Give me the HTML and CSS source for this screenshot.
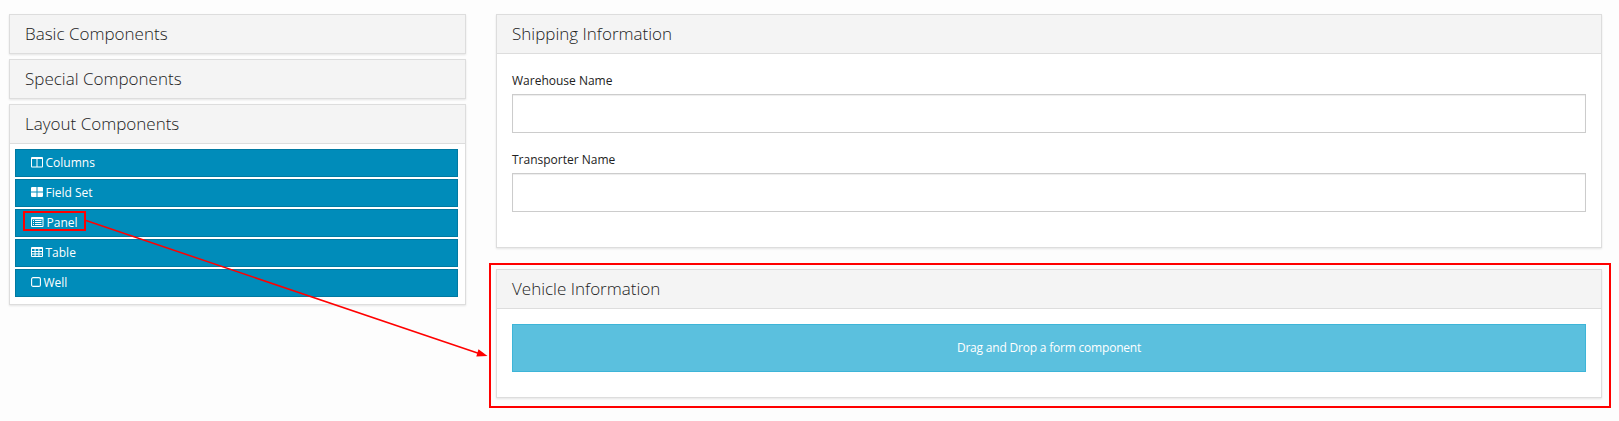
FILE: index.html
```
<!DOCTYPE html>
<html lang="en">
<head>
<meta charset="utf-8">
<title>Form Builder</title>
<link rel="stylesheet" href="styles.css">
</head>
<body>
<div class="builder">
  <aside class="sidebar">
    <section class="panel"><h4 class="heading">Basic Components</h4></section>
    <section class="panel"><h4 class="heading">Special Components</h4></section>
    <section class="panel">
      <h4 class="heading open">Layout Components</h4>
      <div class="components">
        <div class="component"><svg class="icon" width="12" height="11" viewBox="0 0 12 11"><path fill="#fff" fill-rule="evenodd" d="M1 0h10a1 1 0 0 1 1 1v8.500a1 1 0 0 1-1 1H1a1 1 0 0 1-1-1V1a1 1 0 0 1 1-1zM1 2v7.500h4.500V2zM6.500 2v7.500H11V2z"/></svg><span>Columns</span></div>
        <div class="component"><svg class="icon" width="12" height="11" viewBox="0 0 12 11"><path fill="#fff" d="M.8 0h4.700v4.500H0V.8zM6.500 0h4.700l.8.8v3.700H6.500zM0 5.500h5.500V10H.8L0 9.200zM6.500 5.500H12v3.700l-.8.8H6.500z"/></svg><span>Field Set</span></div>
        <div class="component"><svg class="icon" width="13" height="11" viewBox="0 0 13 11"><path fill="#fff" fill-rule="evenodd" d="M1 0h10.500a1 1 0 0 1 1 1v8a1 1 0 0 1-1 1H1a1 1 0 0 1-1-1V1a1 1 0 0 1 1-1zM1 2.300V9h10.500V2.300z"/><path fill="#fff" d="M2 3h1v1H2zM4 3h6.500v1H4zM2 5h1v1H2zM4 5h6.500v1H4zM2 7h1v1H2zM4 7h6.500v1H4z"/></svg><span>Panel</span></div>
        <div class="component"><svg class="icon" width="12" height="11" viewBox="0 0 12 11"><path fill="#fff" fill-rule="evenodd" d="M1 0h10a1 1 0 0 1 1 1v8a1 1 0 0 1-1 1H1a1 1 0 0 1-1-1V1a1 1 0 0 1 1-1zM1 2v2h2.600V2zM4.600 2v2h2.800V2zM8.400 2v2H11V2zM1 5v1.500h2.600V5zM4.600 5v1.500h2.800V5zM8.400 5v1.500H11V5zM1 7.500V9h2.600V7.500zM4.600 7.500V9h2.800V7.500zM8.400 7.500V9H11V7.500z"/></svg><span>Table</span></div>
        <div class="component"><svg class="icon" width="10" height="11" viewBox="0 0 10 11"><rect x=".6" y=".6" width="8.800" height="8.800" rx="1.500" fill="none" stroke="#fff" stroke-width="1.100"/></svg><span>Well</span></div>
      </div>
    </section>
  </aside>
  <main class="form">
    <section class="panel shipping">
      <h4 class="heading open">Shipping Information</h4>
      <div class="body">
        <label class="label" for="warehouse">Warehouse Name</label>
        <input class="input" id="warehouse" type="text">
        <label class="label" for="transporter">Transporter Name</label>
        <input class="input" id="transporter" type="text">
      </div>
    </section>
    <section class="panel vehicle">
      <h4 class="heading open">Vehicle Information</h4>
      <div class="body"><div class="drop">Drag and Drop a form component</div></div>
    </section>
  </main>
</div>
<svg class="annotation" width="1619" height="421" viewBox="0 0 1619 421">
  <rect x="24" y="212" width="61" height="18" fill="none" stroke="#f00" stroke-width="2"/>
  <rect x="490" y="264" width="1120" height="143" fill="none" stroke="#f00" stroke-width="2"/>
  <path d="M86 220.500L479 353.500" stroke="#f00" stroke-width="1.500"/>
  <path d="M487.500 356l-9-6.800-2.200 7.300z" fill="#f00"/>
</svg>
</body>
</html>
```
FILE: styles.css
```
* { box-sizing: border-box; }
body {
  margin: 0;
  height: 421px;
  overflow: hidden;
  background: #fdfdfd;
  color: #222;
  font-family: "Open Sans", sans-serif;
  font-size: 12px;
}
.builder {
  display: grid;
  grid-template-columns: 457px 1106px;
  column-gap: 30px;
  align-items: start;
  padding: 14px 0 0 9px;
}
.sidebar { display: flex; flex-direction: column; gap: 5px; }
.form { display: flex; flex-direction: column; gap: 21px; }
.panel {
  background: #fff;
  border: 1px solid #ddd;
  box-shadow: 0 1px 2px rgba(0, 0, 0, .1);
}
.heading {
  margin: 0;
  height: 38px;
  padding-left: 15px;
  background: #f4f4f4;
  color: #222;
  font-size: 17px;
  font-weight: 300;
  line-height: 38px;
}
.heading.open { height: 39px; border-bottom: 1px solid #ddd; }
.components {
  display: flex;
  flex-direction: column;
  gap: 2px;
  padding: 5px 7px 7px 5px;
}
.component {
  display: flex;
  align-items: flex-start;
  gap: 2.5px;
  height: 28px;
  padding: 0 15px;
  border: 1px solid #0079a1;
  background: #008cba;
  color: #fff;
  font-size: 12px;
  font-weight: 500;
  line-height: 26px;
}
.icon { flex: none; margin-top: 7px; }
.shipping { height: 234px; }
.vehicle { height: 129px; }
.body { padding: 15px; }
.label { display: block; height: 25px; line-height: 23px; font-size: 12px; }
.input {
  display: block;
  width: 100%;
  height: 39px;
  margin-bottom: 15px;
  border: 1px solid #ccc;
  border-radius: 0;
  background: #fff;
  box-shadow: inset 0 1px 1px rgba(0, 0, 0, .075);
}
.drop {
  height: 48px;
  border: 1px solid #3db5d8;
  background: #5bc0de;
  color: #fff;
  letter-spacing: -.2px;
  line-height: 46px;
  text-align: center;
}
.annotation { position: absolute; top: 0; left: 0; pointer-events: none; }
```
